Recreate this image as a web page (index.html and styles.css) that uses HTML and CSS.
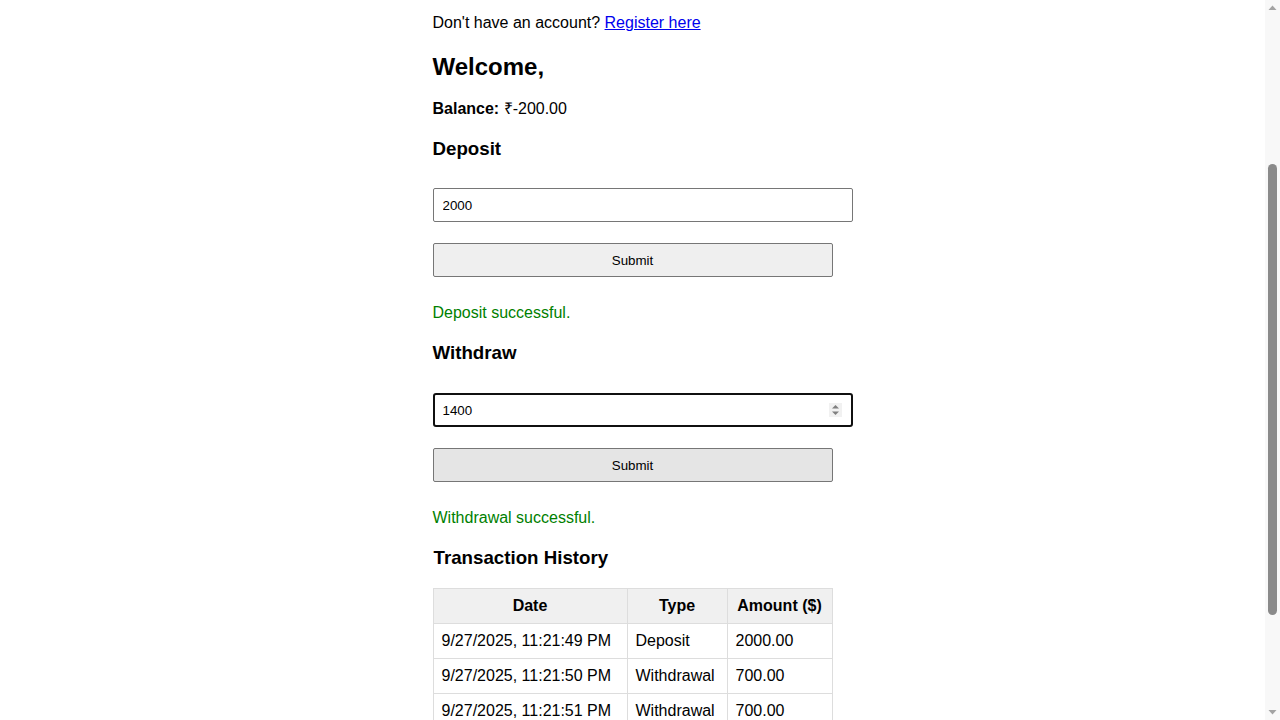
FILE: index.html
```html
<!DOCTYPE html>
<html lang="en">
<head>
<meta charset="utf-8">
<title>Bank</title>
<link rel="stylesheet" href="styles.css">
</head>
<body>
<div class="page">
  <p class="note">Don't have an account? <a href="#register">Register here</a></p>

  <h2 class="title">Welcome,</h2>
  <p class="balance"><strong>Balance:</strong> ₹-200.00</p>

  <section class="op op-first">
    <h3 class="sub">Deposit</h3>
    <input class="field" type="number" value="2000">
    <button class="btn" type="button">Submit</button>
    <p class="msg">Deposit successful.</p>
  </section>

  <section class="op">
    <h3 class="sub">Withdraw</h3>
    <div class="field-wrap">
      <input class="field field-focus" type="number" value="1400">
      <span class="spin" aria-hidden="true">
        <svg width="13" height="14" viewBox="0 0 13 14"><rect width="13" height="14" fill="#f1f1f1"/><path d="M3 5.5 L6.5 2 L10 5.5 Z" fill="#7f7f7f"/><path d="M3 8.5 L6.5 12 L10 8.5 Z" fill="#7f7f7f"/></svg>
      </span>
    </div>
    <button class="btn btn-hover" type="button">Submit</button>
    <p class="msg">Withdrawal successful.</p>
  </section>

  <section class="history">
    <h3 class="sub history-title">Transaction History</h3>
    <table class="tx">
      <colgroup><col class="c-date"><col class="c-type"><col class="c-amt"></colgroup>
      <thead>
        <tr><th>Date</th><th>Type</th><th>Amount ($)</th></tr>
      </thead>
      <tbody>
        <tr><td>9/27/2025, 11:21:49 PM</td><td>Deposit</td><td>2000.00</td></tr>
        <tr><td>9/27/2025, 11:21:50 PM</td><td>Withdrawal</td><td>700.00</td></tr>
        <tr><td>9/27/2025, 11:21:51 PM</td><td>Withdrawal</td><td>700.00</td></tr>
      </tbody>
    </table>
  </section>
</div>

<div class="scrollbar" aria-hidden="true">
  <svg class="sb-arrow sb-up" width="15" height="15" viewBox="0 0 15 15"><path d="M3.5 10 L7.5 5.5 L11.5 10 Z" fill="#a3a3a3"/></svg>
  <div class="sb-thumb"></div>
  <svg class="sb-arrow sb-down" width="15" height="15" viewBox="0 0 15 15"><path d="M3.5 5 L7.5 9.5 L11.5 5 Z" fill="#a3a3a3"/></svg>
</div>
</body>
</html>
```

FILE: styles.css
```css
html {
  font-family: "Liberation Sans", Arial, sans-serif;
  font-size: 16px;
  color: #000;
  background: #fff;
}
body {
  margin: 0 15px 0 0;
}
.page {
  width: 400px;
  margin: 0 auto;
  padding-bottom: 40px;
}
.note {
  margin: 14px 0 0;
  line-height: 18px;
}
.note a {
  color: #0000ee;
  text-decoration: underline;
}
.title {
  margin: 21px 0 0;
  font-size: 24px;
  line-height: 28px;
  font-weight: bold;
}
.balance {
  margin: 19px 0 0;
  line-height: 18px;
}
.sub {
  margin: 20px 0 0;
  font-size: 18.72px;
  line-height: 22px;
  font-weight: bold;
}
.history-title {
  padding-left: 1px;
}
.field {
  display: block;
  box-sizing: content-box;
  width: 100%;
  height: 32px;
  padding: 0 9px;
  margin: 29px 0 0;
  border: 1px solid #767676;
  border-radius: 2px;
  background: #fff;
  font-family: "Liberation Sans", Arial, sans-serif;
  font-size: 13.33px;
  color: #000;
  outline: none;
}
.op-first .field {
  margin-top: 28px;
}
.field::-webkit-inner-spin-button,
.field::-webkit-outer-spin-button {
  -webkit-appearance: none;
  margin: 0;
}
.field[type=number] {
  -moz-appearance: textfield;
}
.field-wrap {
  position: relative;
  width: 400px;
  margin-top: 29px;
}
.field-wrap .field {
  margin-top: 0;
}
.field-focus {
  height: 30px;
  padding: 0 8px;
  border: 2px solid #101010;
  border-radius: 3px;
}
.spin {
  position: absolute;
  left: 396px;
  top: 10px;
  width: 13px;
  height: 14px;
  display: block;
}
.spin svg {
  display: block;
}
.btn {
  display: block;
  width: 400px;
  height: 34px;
  margin: 21px 0 0;
  padding: 0;
  border: 1px solid #767676;
  border-radius: 2px;
  background: #efefef;
  font-family: "Liberation Sans", Arial, sans-serif;
  font-size: 13.33px;
  color: #000;
}
.btn-hover {
  background: #e5e5e5;
}
.msg {
  margin: 27px 0 0;
  line-height: 18px;
  color: #008000;
}
.tx {
  margin-top: 19px;
  width: 399px;
  border-collapse: collapse;
  table-layout: fixed;
}
.c-date { width: 194px; }
.c-type { width: 100px; }
.c-amt { width: 105px; }
.tx th,
.tx td {
  border: 1px solid #dddddd;
  padding: 8px;
  line-height: 18px;
  text-align: left;
  white-space: nowrap;
}
.tx th {
  background: #f0f0f0;
  text-align: center;
  font-weight: bold;
}
.scrollbar {
  position: fixed;
  top: 0;
  right: 0;
  width: 15px;
  height: 100%;
  background: #f8f8f8;
}
.sb-arrow {
  position: absolute;
  left: 0;
  display: block;
}
.sb-up {
  top: 0;
}
.sb-down {
  bottom: 0;
}
.sb-thumb {
  position: absolute;
  left: 3px;
  top: 164px;
  width: 9px;
  height: 451px;
  border-radius: 5px;
  background: #8a8a8a;
}
```
